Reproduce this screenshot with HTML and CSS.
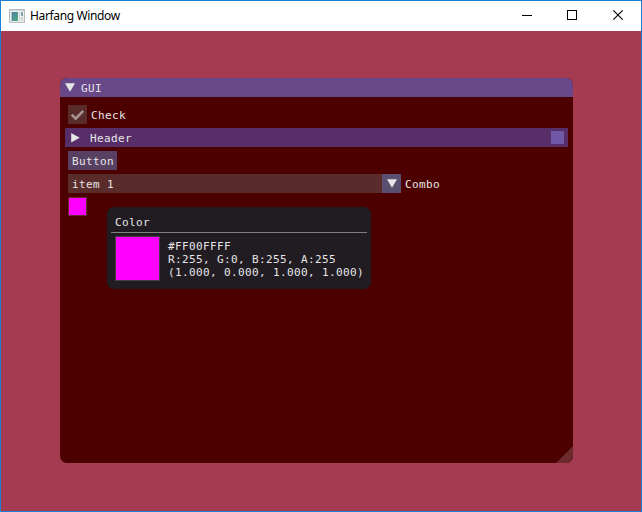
FILE: index.html
```html
<!DOCTYPE html>
<html lang="en">
<head>
<meta charset="utf-8">
<title>Harfang Window</title>
<link rel="stylesheet" href="styles.css">
</head>
<body>
<div class="window">
  <header class="titlebar">
    <svg class="app-icon" width="16" height="14" viewBox="0 0 16 14">
      <defs><linearGradient id="screen" x1="0" y1="0" x2="1" y2="1"><stop stop-color="#4f7cae"/><stop offset="1" stop-color="#55ad76"/></linearGradient></defs>
      <path fill="#b9bdc1" d="M0 0h16v14H0z"/>
      <path fill="#eceeef" d="M1 2h14v11H1z"/>
      <path fill="url(#screen)" d="M2 3h7v9H2z"/>
      <path fill="#a9c9c2" d="M2 3h1v9H2z"/>
      <path fill="#7da5a5" d="M12 3h2v4h-2z"/>
      <path fill="#d3d6d8" d="M10 3h1v9h-1zM12 8h2v4h-2zM1 1h12v1H1z"/>
    </svg>
    <span class="caption">Harfang Window</span>
    <svg class="controls" width="103" height="12" viewBox="0 0 103 12" fill="none" stroke="#000">
      <path d="M1 6.500h10M46.500 1.500h9v9h-9z" shape-rendering="crispEdges"/>
      <path d="M92.300 1.300l9.400 9.400M101.700 1.300l-9.400 9.400" stroke-width="1.150"/>
    </svg>
  </header>
  <main class="viewport">
    <section class="panel">
      <div class="panel-title">
        <svg width="10" height="9" viewBox="0 0 10 9"><path fill="#e6e6e6" d="M0 .2h10L5 8.700z"/></svg>
        <span>GUI</span>
      </div>
      <div class="panel-body">
        <div class="row">
          <div class="checkbox"><svg width="19" height="19" viewBox="0 0 19 19"><path d="M3.700 9.600l4 4 7.500-7.800" fill="none" stroke="#a69594" stroke-width="2.500"/></svg></div>
          <span class="label">Check</span>
        </div>
        <div class="collapse">
          <svg width="9" height="10" viewBox="0 0 9 10"><path fill="#e6e6e6" d="M.2 0v9.600L8.700 4.800z"/></svg>
          <span>Header</span>
          <i class="close"></i>
        </div>
        <div class="button">Button</div>
        <div class="row">
          <div class="combo"><span>item 1</span>
            <div class="arrow"><svg width="10" height="9" viewBox="0 0 10 9"><path fill="#e6e6e6" d="M0 .2h10L5 8.700z"/></svg></div>
          </div>
          <span class="label">Combo</span>
        </div>
        <div class="swatch"></div>
      </div>
      <svg class="grip" width="17" height="17" viewBox="0 0 17 17"><path fill="#6b2a2c" d="M17 0v10a7 7 0 0 1-7 7H0z"/></svg>
      <div class="tooltip">
        <div class="tip-title">Color</div>
        <div class="tip-body">
          <div class="preview"></div>
          <div class="values"><div>#FF00FFFF</div><div>R:255, G:0, B:255, A:255</div><div>(1.000, 0.000, 1.000, 1.000)</div></div>
        </div>
      </div>
    </section>
  </main>
</div>
</body>
</html>
```
FILE: styles.css
```css
* { box-sizing: border-box; }
body { margin: 0; }
svg { display: block; }
.window {
  width: 642px;
  height: 512px;
  border: 1px solid #1b80d3;
  display: flex;
  flex-direction: column;
  background: #a53b50;
}
.titlebar {
  height: 30px;
  flex: none;
  background: #fff;
  display: flex;
  align-items: center;
  padding: 0 17px 0 8px;
}
.app-icon { margin-top: -1px; }
.caption {
  margin-left: 5px;
  font: 12px/16px "Noto Sans", sans-serif;
  letter-spacing: -0.36px;
  color: #000;
}
.controls { margin: -2px 0 0 auto; }
.viewport { padding: 47px 0 0 59px; }
.panel {
  position: relative;
  width: 513px;
  height: 385px;
  border-radius: 7px;
  overflow: hidden;
  background: #4c0000;
  color: #e6e6e6;
  font: 11px/13px "DejaVu Sans Mono", monospace;
  letter-spacing: 0.378px;
  white-space: nowrap;
}
.panel span { padding-top: 2px; }
.panel-title {
  height: 19px;
  background: #69488a;
  display: flex;
  align-items: center;
  gap: 6px;
  padding-left: 5px;
}
.panel-body {
  padding: 8px;
  display: flex;
  flex-direction: column;
  gap: 4px;
}
.row { display: flex; align-items: center; height: 19px; }
.label { margin-left: 4px; }
.checkbox { width: 19px; height: 19px; background: #5a2b2b; }
.collapse {
  height: 19px;
  margin: 0 -3px;
  padding: 0 4px 0 6px;
  background: #572e68;
  display: flex;
  align-items: center;
}
.collapse span { margin-left: 10px; }
.close { width: 13px; height: 13px; margin-left: auto; background: #6f58a5; }
.button {
  width: 49px;
  height: 19px;
  padding: 4px 4px 0;
  background: #574061;
}
.combo {
  width: 333px;
  height: 19px;
  padding-left: 4px;
  background: #5a2b2b;
  display: flex;
  align-items: center;
  justify-content: space-between;
}
.arrow {
  width: 19px;
  height: 19px;
  background: #5a4f70;
  display: grid;
  place-items: center;
}
.swatch { width: 19px; height: 19px; background: #f0f; border: 1px solid #652b30; }
.grip { position: absolute; right: 0; bottom: 0; }
.tooltip {
  position: absolute;
  left: 47px;
  top: 129px;
  width: 264px;
  height: 82px;
  border-radius: 7px;
  background: #211c21;
  padding: 8px 4px;
}
.tip-title { height: 18px; padding: 1px 4px 0; border-bottom: 1px solid #7f7f7f; }
.tip-body { display: flex; gap: 8px; padding: 3px 4px 0; }
.preview { flex: none; width: 45px; height: 45px; background: #f0f; border: 1px solid #454047; }
.values { padding-top: 4px; }
```
